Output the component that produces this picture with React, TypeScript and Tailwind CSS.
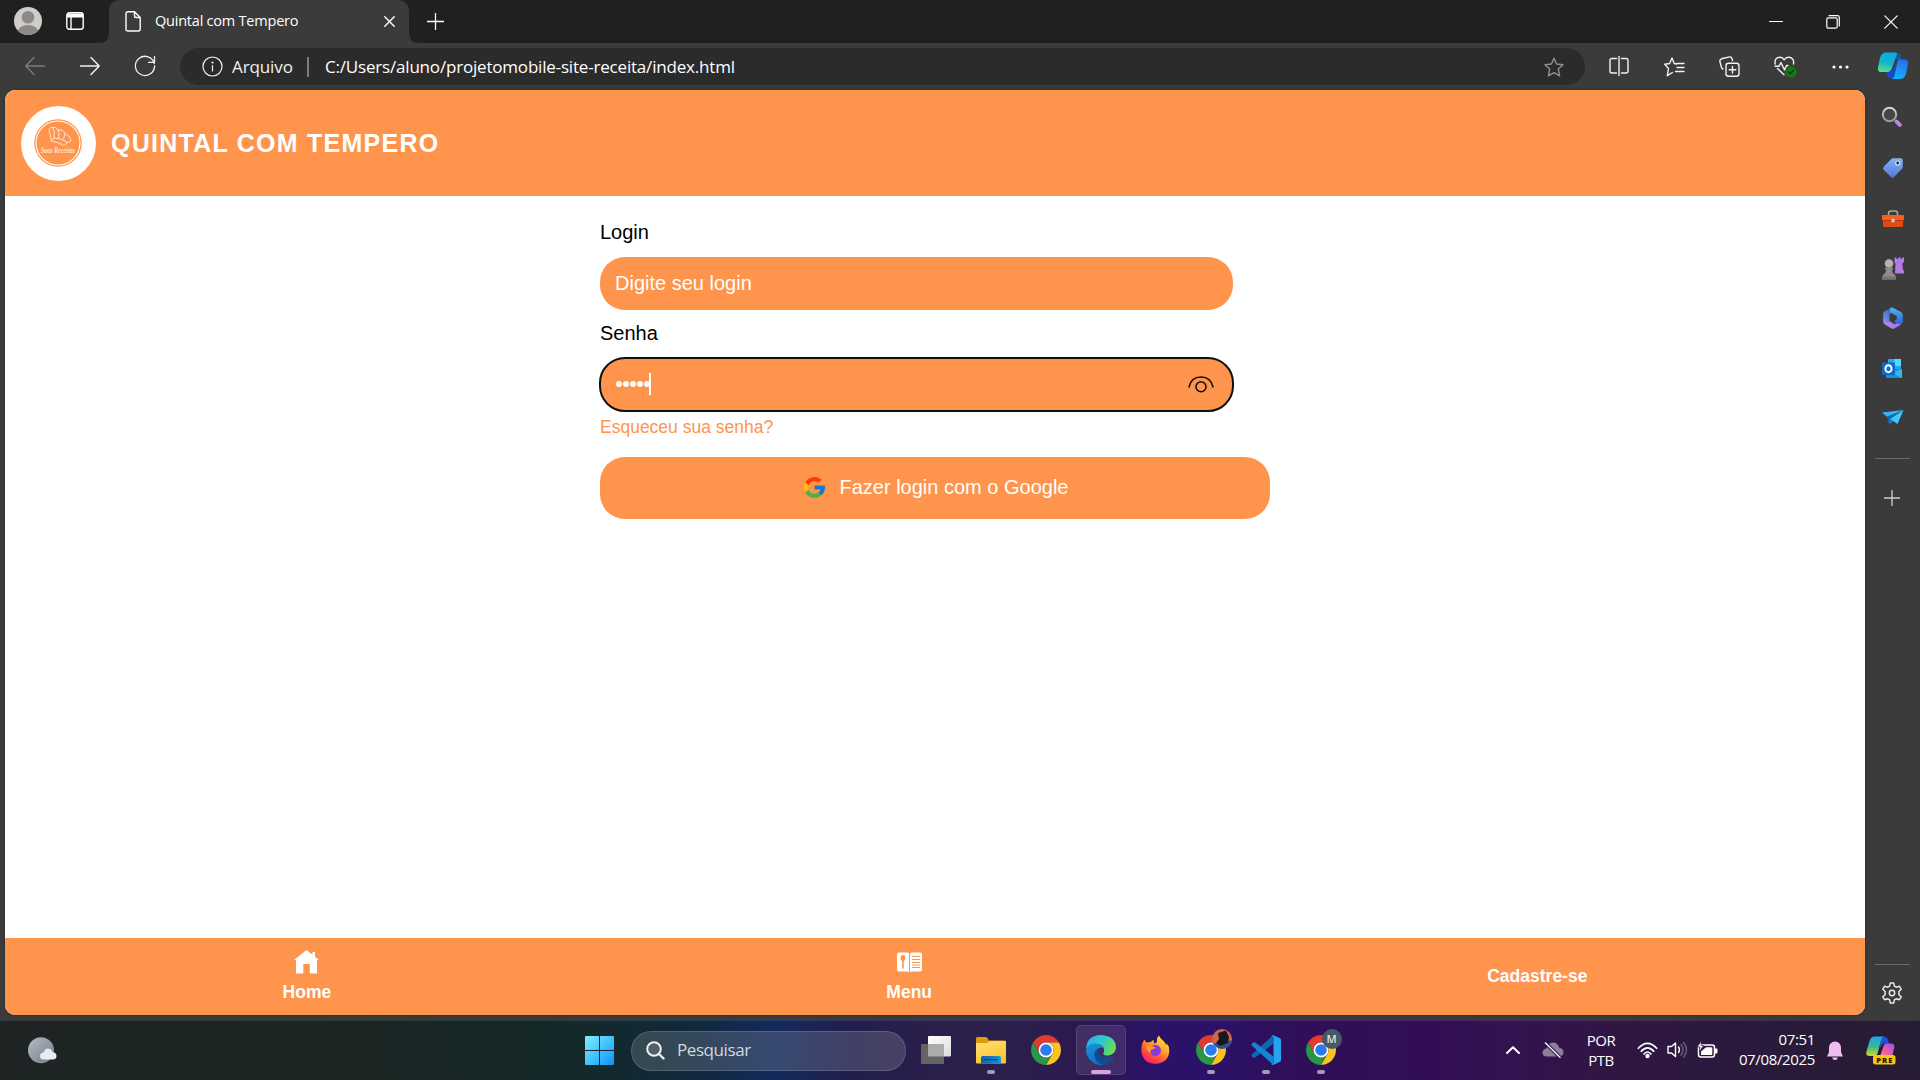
import React from "react";

type IconProps = { className?: string };

const ui = "font-['Open_Sans','Noto_Sans',sans-serif]";

/* ---------- Browser chrome icons ---------- */

const Line = ({ d, w = 20, h = 20, className = "", sw = 1.4, children }: { d?: string; w?: number; h?: number; className?: string; sw?: number; children?: React.ReactNode }) => (
  <svg width={w} height={h} viewBox={`0 0 ${w} ${h}`} fill="none" stroke="currentColor" strokeWidth={sw} strokeLinecap="round" strokeLinejoin="round" className={`block shrink-0 ${className}`}>
    {d && <path d={d} />}
    {children}
  </svg>
);

const Avatar = () => (
  <svg width="28" height="28" viewBox="0 0 28 28" className="block shrink-0">
    <defs><clipPath id="av"><circle cx="14" cy="14" r="14" /></clipPath></defs>
    <g clipPath="url(#av)">
      <rect width="28" height="28" fill="#cfcdca" />
      <circle cx="14" cy="10.2" r="6.3" fill="#8d8987" />
      <ellipse cx="14" cy="25.5" rx="10.5" ry="7.5" fill="#8d8987" />
    </g>
  </svg>
);

const starPath = "M10 1.2 L12.6 7 L19 7.7 L14.3 12 L15.6 18.8 L10 15.6 L4.4 18.8 L5.7 12 L1 7.7 L7.4 7 Z";

const Copilot = () => (
  <svg width="32" height="30" viewBox="0 0 32 30" className="block shrink-0">
    <defs>
      <linearGradient id="cp1" x1="0.4" y1="0" x2="0.2" y2="1"><stop offset="0" stopColor="#0fa8e8" /><stop offset=".5" stopColor="#12b5c8" /><stop offset="1" stopColor="#5fe08a" /></linearGradient>
      <linearGradient id="cp2" x1="0.6" y1="0" x2="0.3" y2="1"><stop offset="0" stopColor="#2a6fe8" /><stop offset="1" stopColor="#12b4fb" /></linearGradient>
    </defs>
    <path d="M17 1.5 h3 q3 0 4 4 l.8 3 h-6 l-6 5z" fill="#0b5f9c" />
    <path d="M8.5 20 h7 l4-10 -2 17.5 h-3 q-3 0-4-3.500z" fill="#1546d8" />
    <path d="M9 1.500 h9.500 q2 .3 1 3 l-4.500 12.500 q-1.500 4-4.500 4 H4 q-3.500 0-3-4.500 l2-9.500 Q4.500 1.500 9 1.500z" fill="url(#cp1)" />
    <path d="M22 8.500 h6 q3.500 0 3 4.500 l-2 9.500 q-1.500 5.500-6 5.500 h-8.500 q2.200-.7 3-3 l2.500-13 q.7-3.500 2-3.500z" fill="url(#cp2)" />
  </svg>
);

/* ---------- Sidebar icons ---------- */

const SideSearch = () => (
  <svg width="22" height="22" viewBox="0 0 22 22" className="block">
    <defs><linearGradient id="ring" x1="0" y1="0" x2="0" y2="1"><stop stopColor="#d8d6d4" /><stop offset="1" stopColor="#9a9896" /></linearGradient></defs>
    <circle cx="8.500" cy="8.500" r="6.700" fill="#454548" stroke="url(#ring)" strokeWidth="2" />
    <path d="M15.500 15.500 L18.800 18.800" stroke="#b884ee" strokeWidth="4" strokeLinecap="round" />
  </svg>
);
const SideTag = () => (
  <svg width="22" height="22" viewBox="0 0 22 22" className="block">
    <defs><linearGradient id="tg" x1="0" y1="0" x2="0" y2="1"><stop stopColor="#86b0f5" /><stop offset="1" stopColor="#4f7bd8" /></linearGradient></defs>
    <path d="M11 1.200 h7.500 q2.300 0 2.300 2.300 V10 q0 1-.8 1.800 L12 20 q-1.500 1.500-3 0 L1.700 12.800 q-1.400-1.500 0-3 L9.300 2 q.7-.8 1.700-.8z" fill="url(#tg)" />
    <circle cx="15.700" cy="6" r="2" fill="#222" stroke="#dfe6f2" strokeWidth="1.200" />
  </svg>
);
const SideToolbox = () => (
  <svg width="22" height="18" viewBox="0 0 22 18" className="block">
    <path d="M6.500 5 V3.500 Q6.500 1 9 1 h4 q2.500 0 2.500 2.500 V5" fill="none" stroke="#aaa9a8" strokeWidth="1.500" />
    <rect x="1" y="8" width="20" height="9" rx="1" fill="#e14c12" />
    <rect x="0" y="5" width="22" height="6" rx="1" fill="#f2611f" />
    <path d="M0 10.500h22" stroke="#b8350a" strokeWidth="1" />
    <circle cx="11" cy="10.500" r="2" fill="#c9c7c5" />
  </svg>
);
const SideChess = () => (
  <svg width="22" height="23" viewBox="0 0 22 23" className="block">
    <path d="M12.500 .5 h2 v1.500 h1.700 V.5 h2.600 v1.500 h1.200 V.5 h2 v4.500 l-1.700 1.500 .5 5.500 1.200 2.500 v2 H13 l.5-10-1-1z" fill="#b27be6" />
    <circle cx="7" cy="6.500" r="4.300" fill="#b5b3b1" />
    <path d="M3 10.500h8v2H9.800q.2 3.500 3.200 5.500 1 .8 1 4.500H0q0-3.700 1-4.500 3-2 3.200-5.500H3z" fill="#8f8d8b" />
    <path d="M0 19.500h14v3H0z" fill="#777573" />
  </svg>
);
const Side365 = () => (
  <svg width="22" height="22" viewBox="0 0 22 22" className="block">
    <defs>
      <linearGradient id="m1" x1="1" y1="0" x2="0" y2="1"><stop stopColor="#2451a8" /><stop offset="1" stopColor="#7f9ff5" /></linearGradient>
      <linearGradient id="m2" x1="0" y1="0" x2="1" y2="0"><stop stopColor="#b18af2" /><stop offset="1" stopColor="#a46fe0" /></linearGradient>
      <linearGradient id="m3" x1="0" y1="0" x2="0" y2="1"><stop stopColor="#4fb4f2" /><stop offset="1" stopColor="#2c62d8" /></linearGradient>
    </defs>
    <path d="M10 .5 L3 4 Q1.200 5 1.200 7 V14.500 q0 2 2 2.500 L7.500 14.500 V7.500 L13 3z" fill="url(#m1)" />
    <path d="M1.500 14.500 q3 2 6.500-.3 L12 17 l8-2 -1 2.500 -6 3.800 q-2 1-4 0 L3 17.500 Q1.500 16 1.500 14.500z" fill="url(#m2)" />
    <path d="M8 .7 q2-.7 3.500 .2 L19 5 Q20.800 6 20.800 8 V14 q0 2.500-2 3 -3 .5-7-2.700 l3-1.800 V9 L8 5.500z" fill="url(#m3)" />
  </svg>
);
const SideOutlook = () => (
  <svg width="22" height="20" viewBox="0 0 22 20" className="block">
    <rect x="6" y="0" width="13" height="12" rx="1" fill="#28a8ea" />
    <rect x="12.500" y="0" width="6.500" height="7" fill="#50d9ff" />
    <path d="M4 10 h16 v8 q0 1-1 1 H5 q-1 0-1-1z" fill="#1490df" />
    <path d="M20 10 v9 L10 14z" fill="#35b8f1" />
    <rect x="0" y="3.500" width="13" height="12.500" rx="1.200" fill="#0f6cc4" />
    <ellipse cx="6.500" cy="9.700" rx="3.100" ry="3.500" fill="none" stroke="#fff" strokeWidth="1.900" />
  </svg>
);
const SidePlane = () => (
  <svg width="22" height="16" viewBox="0 0 22 16" className="block">
    <path d="M0 2.500 L21.500 0 L7 8.500z" fill="#35b5f5" />
    <path d="M5 6.500 L21.500 0 L8 9 L7 14.500z" fill="#0f66b5" />
    <path d="M8 9 L21.500 0 L15.500 14 z" fill="#3fc6fb" />
    <path d="M7 14.500 L8 9 L11 11.500z" fill="#1586d8" />
  </svg>
);
const Gear = () => (
  <svg width="22" height="22" viewBox="0.500 0.500 23 23" fill="none" stroke="#ededed" strokeWidth="1.500" strokeLinejoin="round" className="block">
    <path d="M10.300 1.500h3.400l.8 3.400q1 .3 2 1.100l3.300-1 1.800 3-2.500 2.500q.3 1.500 0 3l2.500 2.500-1.800 3-3.300-1q-1 .8-2 1.100l-.8 3.400h-3.400l-.8-3.400q-1-.3-2-1.100l-3.300 1-1.800-3 2.500-2.500q-.3-1.500 0-3L2.400 8l1.800-3 3.300 1q1-.8 2-1.100z" />
    <circle cx="12" cy="12" r="2.800" />
  </svg>
);

/* ---------- Page icons ---------- */

const RecipeLogo = () => (
  <svg width="48" height="48" viewBox="0 0 48 48" className="block overflow-visible">
    <circle cx="24" cy="24" r="23.800" fill="#ff944d" />
    <circle cx="24" cy="24" r="22" fill="none" stroke="#fff" strokeWidth="1.100" />
    <g fill="none" stroke="#fff" strokeWidth=".9" strokeLinejoin="round" opacity=".85">
      <path d="M17.500 22 L15.500 13 Q14 9 18 8.500 Q22 7.500 24 11 Q29 10 31 14.500 Q36 17 37 21 Q36 24 33.500 23.500 L30 26.500 Q24 23 17.500 22z" />
      <path d="M19 9 Q21 12 20 19 M24 11 Q26 14 24.500 20 M31 14.500 Q31 18 28 21 M17.500 22 L20 19 Q27 19 33.500 23.500" />
    </g>
    <text x="24" y="33.500" textAnchor="middle" fontSize="8" fontStyle="italic" fill="#fff" fontFamily="Liberation Serif, serif" textLength="34" lengthAdjust="spacingAndGlyphs">Suas Receitas</text>
  </svg>
);

const GoogleG = () => (
  <svg width="21" height="21" viewBox="4 4 40 40" className="block shrink-0">
    <path fill="#FFC107" d="M43.600 20.100H42V20H24v8h11.300c-1.600 4.700-6.100 8-11.300 8-6.600 0-12-5.400-12-12s5.400-12 12-12c3.100 0 5.800 1.200 8 3l5.700-5.700C34 6.100 29.300 4 24 4 13 4 4 13 4 24s9 20 20 20 20-9 20-20c0-1.300-.1-2.600-.4-3.900z" />
    <path fill="#FF3D00" d="m6.300 14.700 6.600 4.800C14.700 15.100 19 12 24 12c3.100 0 5.800 1.200 8 3l5.700-5.700C34 6.100 29.300 4 24 4 16.300 4 9.700 8.300 6.300 14.700z" />
    <path fill="#4CAF50" d="M24 44c5.200 0 9.900-2 13.400-5.200l-6.200-5.200C29.200 35.100 26.700 36 24 36c-5.200 0-9.600-3.300-11.300-7.900l-6.500 5C9.500 39.600 16.200 44 24 44z" />
    <path fill="#1976D2" d="M43.600 20.100H42V20H24v8h11.300c-.8 2.200-2.200 4.200-4.100 5.600l6.200 5.200C37 39.200 44 34 44 24c0-1.300-.1-2.600-.4-3.900z" />
  </svg>
);

const HomeIcon = () => (
  <svg width="25" height="24" viewBox="0 0 25 24" className="block" fill="#fff">
    <path d="M12.500 0 L18.500 4.800 V2 h2.500 v4.800 L25 10 H23 V23.500 H15.800 V14 H9.300 V23.500 H2 V10 H0z" />
  </svg>
);
const MenuBook = () => (
  <svg width="25" height="21" viewBox="0 0 25 21" className="block">
    <path d="M2 0.500 h8 q1.500 0 2 1 V20.500 q-.5-1-2-1 H2 q-2 0-2-2 V2.500 q0-2 2-2z M15 .5 h8 q2 0 2 2 V17.500 q0 2-2 2 h-8 q-1.500 0-2 1 V1.500 q.5-1 2-1z" fill="#fff" />
    <ellipse cx="6" cy="6" rx="2.400" ry="3" fill="#ff944d" />
    <path d="M6 8v8.500" stroke="#ff944d" strokeWidth="1.600" />
    <path d="M15 4.500h8 M15 7.500h8 M15 10.500h8 M15 13h8 M15 15.500h8" stroke="#ff944d" strokeWidth="1" />
  </svg>
);

/* ---------- Taskbar icons ---------- */

const Weather = () => (
  <svg width="29" height="27" viewBox="0 0 29 27" className="block">
    <defs><linearGradient id="moon" x1="0" y1="0" x2="1" y2="1"><stop stopColor="#b4bcc6" /><stop offset="1" stopColor="#757c88" /></linearGradient></defs>
    <circle cx="13" cy="13.200" r="13" fill="url(#moon)" />
    <path d="M16 22.500 q-4 0-4-3.500 0-3 3.500-3.500 Q17 11.500 20 11.500 q3.500 0 4.500 3.500 4 .5 4 4 0 3.500-4 3.500z" fill="#e9edf2" />
  </svg>
);
const WindowsLogo = () => (
  <svg width="29" height="29" viewBox="0 0 29 29" className="block shrink-0">
    <defs><linearGradient id="wl" gradientUnits="userSpaceOnUse" x1="0" y1="0" x2="29" y2="29"><stop stopColor="#7ff0ff" /><stop offset="1" stopColor="#0a94fb" /></linearGradient></defs>
    <path fill="url(#wl)" d="M1 0h13v14H0V1q0-1 1-1z M15 0h13q1 0 1 1v13H15z M0 15h14v14H1q-1 0-1-1z M15 15h14v13q0 1-1 1H15z" />
  </svg>
);
const TaskView = () => (
  <svg width="30" height="28" viewBox="0 0 30 28" className="block">
    <defs><linearGradient id="tv" x1="0" y1="0" x2="1" y2="1"><stop stopColor="#fff" /><stop offset="1" stopColor="#dcdcdc" /></linearGradient></defs>
    <rect x="7" y="0" width="23" height="20.500" rx="1" fill="url(#tv)" />
    <rect x="0" y="8" width="23" height="20" rx="1" fill="#636363" />
    <rect x="7" y="8" width="16" height="12.500" fill="#ababab" />
  </svg>
);
const Explorer = () => (
  <svg width="30" height="27" viewBox="0 0 30 27" className="block">
    <defs>
      <linearGradient id="fo" x1="0" y1="0" x2="0.500" y2="1"><stop stopColor="#ffe07a" /><stop offset="1" stopColor="#fcc42c" /></linearGradient>
      <linearGradient id="fb" x1="0" y1="0" x2="1" y2="0"><stop stopColor="#0f63ad" /><stop offset="1" stopColor="#1a93dd" /></linearGradient>
    </defs>
    <path d="M0 1.500 Q0 0 1.500 0 H9.500 q1 0 1.700 .8 L13 3.500 H28.500 Q30 3.500 30 5 V12 H0z" fill="#dd9c0a" />
    <path d="M0 6 H11 L14 4 H30 V25.500 q0 1-1 1 H1 q-1 0-1-1z" fill="url(#fo)" />
    <path d="M5 26.500 V21 q0-2 2-2 H23 q2 0 2 2 V26.500z" fill="url(#fb)" />
    <rect x="8" y="22" width="14" height="1.300" rx=".6" fill="#0b4679" />
  </svg>
);
const Chrome = () => (
  <svg width="30" height="30" viewBox="2 2 44 44" className="block">
    <path d="M4.950 13 A22 22 0 0 1 43.050 13 H24 A11 11 0 0 0 14.470 29.500z" fill="#e23b2e" />
    <path d="M43.050 13 A22 22 0 0 1 24 46 L33.530 29.500 A11 11 0 0 0 24 13z" fill="#fcc31e" />
    <path d="M24 46 A22 22 0 0 1 4.950 13 L14.470 29.500 A11 11 0 0 0 33.530 29.500z" fill="#279847" />
    <circle cx="24" cy="24" r="11" fill="#fff" />
    <circle cx="24" cy="24" r="8.500" fill="#2b7bf0" />
  </svg>
);
const EdgeIcon = () => (
  <svg width="30" height="30" viewBox="0 0 30 30" className="block">
    <defs>
      <linearGradient id="e1" x1="0" y1=".2" x2="1" y2=".6"><stop stopColor="#2fa9ee" /><stop offset=".5" stopColor="#2fc7cf" /><stop offset="1" stopColor="#6be047" /></linearGradient>
      <linearGradient id="e2" x1="0" y1="0" x2=".4" y2="1"><stop stopColor="#1a94dd" /><stop offset="1" stopColor="#0d6fc4" /></linearGradient>
    </defs>
    <path d="M0 14 Q1 0 15 0 Q30 1 30 13 Q29 20 22 20.500 Q17.500 20.500 17.300 18.500 Q17.300 17.700 18 17 Q19 14 17 12 Q13 8 6 9.500 Q1.500 11 0 14z" fill="url(#e1)" />
    <path d="M0 15 Q1 8.500 9 8.500 Q16 8.500 18.200 13 Q13 11.500 10.500 15.500 Q8 21 12.500 26 Q15 29 18 29.500 Q10 31.500 4 25 Q0 20.500 0 15z" fill="url(#e2)" />
    <path d="M12 13.500 Q7.500 16.500 8.500 21 Q10.500 28.500 17 29.700 Q24 29 28 22.500 Q28 21 26.500 21.700 Q19 24.500 14.500 20.500 Q11 17.500 12 13.500z" fill="#114c93" />
  </svg>
);
const Firefox = () => (
  <svg width="29" height="30" viewBox="0 0 29 30" className="block">
    <defs>
      <linearGradient id="f1" x1=".85" y1="0" x2=".2" y2="1"><stop stopColor="#fff04a" /><stop offset=".35" stopColor="#ffb02a" /><stop offset=".65" stopColor="#ff5a35" /><stop offset="1" stopColor="#f0147c" /></linearGradient>
      <radialGradient id="f2"><stop stopColor="#6a49d8" /><stop offset="1" stopColor="#9a35d0" /></radialGradient>
    </defs>
    <path d="M3.500 4.500 Q4.300 7 6 7.500 Q8 6.800 10 7 Q11 5.300 13 5 Q12.500 8 13.500 8.500 L16 7 Q15.500 2.500 18 .5 Q19 3.500 22 5.500 Q24.500 7.500 25 10.500 Q25.700 9.500 25.500 8 Q28.500 11.500 28.300 16 Q27.500 28 14.500 28.800 Q2 28.500 .5 17 Q-.2 9.500 3.500 4.500z" fill="url(#f1)" />
    <circle cx="14.300" cy="15.500" r="5.700" fill="url(#f2)" />
    <path d="M5 11 Q9 9.500 14.500 12.500 Q13 14.500 10.500 14.500 Q8.500 16 10 18.500 Q6 17 5 11z" fill="#ff9a24" />
  </svg>
);
const VsCode = () => (
  <svg width="30" height="30" viewBox="0 0 30 30" className="block">
    <path d="M22 .3 L0.800 19.500 q-.8 .8 0 1.700 l1.600 1.400 q.8 .6 1.700 0 L22.500 8.500z" fill="#0a6ab8" />
    <path d="M22 29.700 L.8 10.500 q-.8-.8 0-1.700 l1.600-1.400 q.8-.6 1.700 0 L22.500 21.500z" fill="#1485d2" />
    <path d="M22.500 .2 L29 3.300 q1 .5 1 1.500 V25.200 q0 1-1 1.500 L22.500 29.800 q-1.500 .3-2.800-.8 2.800 .8 2.800-2 V3 q0-2.800-2.800-2 1.300-1.100 2.800-.8z" fill="#25a4f2" />
  </svg>
);
const CopilotPre = () => (
  <svg width="30" height="29" viewBox="0 0 30 29" className="block">
    <defs>
      <linearGradient id="k1" x1="0" y1="0" x2="0" y2="1"><stop stopColor="#22a3f2" /><stop offset=".5" stopColor="#35b590" /><stop offset="1" stopColor="#d5d92c" /></linearGradient>
      <linearGradient id="k2" x1="1" y1="0" x2="0" y2="1"><stop stopColor="#9a4ef2" /><stop offset=".6" stopColor="#f0619c" /><stop offset="1" stopColor="#ff9d60" /></linearGradient>
    </defs>
    <path d="M15 .5 h3 q3 0 4 3.500 l1 3.500 h-6 l-3 5z" fill="#1b53d5" />
    <path d="M8.500 .5 h9 q-1.500 .7-2.200 3 L12 16 q-1 4-4 4 H3.500 Q-.5 20 .3 16 L3.500 5 Q5 .5 8.500 .5z" fill="url(#k1)" />
    <path d="M20 7.500 h5 q4 0 3.300 4 l-2 8 q-.5 2-3 2 H12 q2-.5 2.700-3 L17.500 10 q.7-2.500 2.500-2.500z" fill="url(#k2)" />
    <rect x="7" y="19" width="22.500" height="9.500" rx="2.500" fill="#fcc40f" />
    <text x="18.300" y="26.500" textAnchor="middle" fontSize="7.600" fontWeight="800" fill="#201a00" fontFamily="Open Sans, sans-serif" textLength="16">PRE</text>
  </svg>
);

function TaskItem({ children, active = false, open = false }: { children: React.ReactNode; active?: boolean; open?: boolean }) {
  return (
    <div className="flex h-full w-[55px] items-start justify-center pt-[4px]">
      <div className={`relative flex h-[50px] w-[50px] items-center justify-center rounded-[5px] ${active ? "bg-white/10 ring-1 ring-white/10 ring-inset" : ""}`}>
        {children}
        {(active || open) && (
          <span className={`absolute bottom-[1px] left-1/2 h-[4px] -translate-x-1/2 rounded-full ${active ? "w-[20px] bg-[#dda0e2]" : "w-[8px] bg-[#a39bb5]"}`} />
        )}
      </div>
    </div>
  );
}

function Cell({ children, className = "" }: { children: React.ReactNode } & IconProps) {
  return <div className={`flex shrink-0 items-center justify-center ${className}`}>{children}</div>;
}

function TitleBar() {
  return (
    <div className="flex h-[43px] shrink-0 bg-[#202020] text-white">
      <div className="flex w-[99px] shrink-0 items-center pb-px pl-[14px]">
        <Avatar />
        <Line w={18} h={18} className="ml-[24px]" sw={1.400}>
          <rect x=".8" y=".8" width="16.400" height="16.400" rx="2.500" />
          <path d="M1 3.500h16" strokeWidth="4" strokeLinecap="butt" />
          <path d="M5 5v12" />
        </Line>
      </div>
      <svg width="10" height="43" viewBox="0 0 10 43" className="block shrink-0"><path d="M10 33 Q10 43 0 43 H10z" fill="#3b3b3b" /></svg>
      <div className="flex w-[300px] shrink-0 items-center rounded-t-[10px] bg-[#3b3b3b] pl-[16px]">
        <Line w={16} h={21} sw={1.400} d="M3 .8 H9.500 L15.200 6.500 V18 q0 2-2 2 H3 q-2 0-2-2 V2.800 q0-2 2-2z M9.500 .8 V5 q0 1.500 1.500 1.500 h4.200" />
        <span className={`${ui} ml-[14px] -mt-px w-[229px] text-[14.500px] leading-[20px] tracking-[-0.22px] whitespace-nowrap`}>Quintal com Tempero</span>
        <Line w={11} h={11} d="M.8 .8 L10.200 10.200 M10.200 .8 L.8 10.200" />
      </div>
      <svg width="10" height="43" viewBox="0 0 10 43" className="block shrink-0"><path d="M0 33 Q0 43 10 43 H0z" fill="#3b3b3b" /></svg>
      <div className="flex flex-1 items-center pb-px pl-[8px]">
        <Line w={17} h={17} d="M8.500 .5 V16.500 M.5 8.500 H16.500" sw={1.300} />
      </div>
      <div className="flex items-center">
        <Cell className="w-[57px]"><Line w={14} h={14} className="-ml-px" d="M.5 6.500H13.500" sw={1} /></Cell>
        <Cell className="w-[57px]"><Line w={14} h={14} className="-ml-px" sw={1.200}><rect x=".8" y="2.800" width="10.400" height="10.400" rx="1.500" /><path d="M3 .7 H11.500 Q13.300 .7 13.300 2.500 V11" /></Line></Cell>
        <Cell className="w-[58px]"><Line w={14} h={14} sw={1.200} d="M.8 .8 L13.200 13.200 M13.200 .8 L.8 13.200" /></Cell>
      </div>
    </div>
  );
}

function Toolbar() {
  return (
    <div className="flex h-[47px] shrink-0 items-center bg-[#3b3b3b] pl-[7px] text-[#f2f2f2]">
      <Cell className="w-[55px] pb-px text-[#7c7c7c]"><Line d="M19.500 10H.8 M9 1.500 L.8 10 L9 18.500" sw={1.300} /></Cell>
      <Cell className="w-[55px] pb-px"><Line d="M.5 10H19.200 M11 1.500 L19.200 10 L11 18.500" /></Cell>
      <Cell className="w-[55px] pb-px"><Line w={22} h={22} d="M20.300 8.500 A9.600 9.600 0 1 0 20.600 11 M20.500 1.500 V7.300 H14.500" sw={1.300} /></Cell>
      <div className="ml-[8px] flex h-[37px] w-[1405px] items-center rounded-full bg-[#2b2b2b] pl-[22px]">
        <Line w={21} h={21} sw={1.200}><circle cx="10.500" cy="10.500" r="9.500" /><path d="M10.500 9.500 V15" /><circle cx="10.500" cy="6.500" r=".5" fill="currentColor" /></Line>
        <span className={`${ui} ml-[9px] w-[75px] text-[17px] leading-[24px] tracking-[-0.1px] whitespace-nowrap`}>Arquivo</span>
        <span className="h-[20px] w-[2px] bg-[#7d7d7d]" />
        <span className={`${ui} ml-[16px] flex-1 text-[17px] leading-[24px] tracking-[-0.19px] whitespace-nowrap text-white`}>C:/Users/aluno/projetomobile-site-receita/index.html</span>
        <Line className="mr-[21px] text-[#8f8f8f]" d={starPath} />
      </div>
      <Cell className="ml-[6px] w-[55px] pb-px"><Line w={20} h={20} d="M7.500 2.500 H3 Q1 2.500 1 4.500 V15 q0 2 2 2 H7.500 M10 .5 V19.500 M12.500 2.500 H17 q2 0 2 2 V15 q0 2-2 2 H12.500" /></Cell>
      <Cell className="ml-px w-[55px]"><Line w={21} h={20} d="M12.500 7 L10.200 6.500 L8 1 L5.600 6.500 L.7 7.300 L4.500 11.500 L3.300 18.700 L8.300 15.500 M12.800 6.500 H20 M13 10.500 H20 M11.500 14.500 H20" /></Cell>
      <Cell className="w-[55px]"><Line w={21} h={21}><rect x="7" y="7.200" width="13" height="13" rx="2.500" /><path d="M13.500 10.500 V17 M10.200 13.700 H16.800 M4 13 Q2.800 12.500 2.500 11.500 L.9 5.500 Q.6 3.500 2.500 2.800 L10.500 .9 Q12.500 .6 13 2.500 L13.500 4.500" /></Line></Cell>
      <Cell className="w-[55px] pl-[2px]">
        <svg width="23" height="22" viewBox="0 0 23 22" fill="none" className="block" stroke="#f2f2f2" strokeWidth="1.400" strokeLinejoin="round" strokeLinecap="round">
          <path d="M1.200 8 Q0 2 5.500 1.300 Q8.500 1 10.200 3.800 Q12 1 15 1.300 Q20.500 2 19.500 8 M3.500 12.500 L10 18.800 M1 10.300 H5 L7 6.500 L10.500 14 L12.500 9.500 H14" />
          <circle cx="17" cy="16" r="5.700" fill="#107c10" stroke="none" />
          <path d="M14.500 16 L16.300 17.700 L19.500 14.300" stroke="#262626" strokeWidth="1.300" />
        </svg>
      </Cell>
      <Cell className="w-[55px] pl-px"><svg width="17" height="4" viewBox="0 0 17 4" fill="#fff" className="block"><circle cx="2" cy="2" r="1.600" /><circle cx="8.500" cy="2" r="1.600" /><circle cx="15" cy="2" r="1.600" /></svg></Cell>
      <Cell className="w-[51px] pb-px"><Copilot /></Cell>
    </div>
  );
}

function Sidebar() {
  return (
    <div className="flex w-[55px] shrink-0 flex-col items-center">
      <div className="flex flex-col items-center pt-[2px]">
        <Cell className="h-[50px] pr-px"><SideSearch /></Cell>
        <Cell className="h-[51px]"><SideTag /></Cell>
        <Cell className="h-[50px] pt-px"><SideToolbox /></Cell>
        <Cell className="h-[50px]"><SideChess /></Cell>
        <Cell className="h-[50px]"><Side365 /></Cell>
        <Cell className="h-[50px] pt-px"><SideOutlook /></Cell>
        <Cell className="h-[50px]"><SidePlane /></Cell>
      </div>
      <div className="mt-[15px] h-px w-[35px] bg-[#6a6a6a]" />
      <Line w={16} h={16} className="mt-[31px] mr-px text-[#d0d0d0]" d="M8 .5 V15.500 M.5 8 H15.500" sw={1.300} />
      <div className="flex-1" />
      <div className="h-px w-[35px] bg-[#6a6a6a]" />
      <div className="mt-[17px] mr-px mb-[16px]"><Gear /></div>
    </div>
  );
}

function LoginPage() {
  return (
    <div className="flex h-[925px] w-[1860px] shrink-0 flex-col overflow-hidden rounded-[10px] bg-white font-['Liberation_Sans',Arial,sans-serif] shadow-[0_0_3px_rgba(0,0,0,0.35)]">
      <header className="flex h-[106px] shrink-0 items-center bg-[#ff944d] pl-[16px]">
        <div className="flex h-[75px] w-[75px] items-center justify-center rounded-full bg-white pr-px"><RecipeLogo /></div>
        <h1 className="ml-[15px] text-[25px] leading-[30px] font-bold tracking-[1.25px] text-white">QUINTAL COM TEMPERO</h1>
      </header>
      <main className="flex-1">
        <div className="ml-[595px] flex w-[670px] flex-col items-start pt-[24px] text-[20px] leading-[24px] text-black">
          <label>Login</label>
          <div className="mt-[13px] flex h-[53px] w-[633px] items-center rounded-[25px] bg-[#ff944d] pb-[2px] pl-[15px] text-white">Digite seu login</div>
          <label className="mt-[11px]">Senha</label>
          <div className="mt-[12px] -ml-px flex h-[55px] w-[635px] items-center rounded-[26px] border-2 border-[#101010] bg-[#ff944d] pr-[18px] pb-px pl-[15px]">
            <div className="flex items-center gap-[1px]">
              {[0, 1, 2, 3, 4].map((i) => <span key={i} className="h-[6px] w-[6px] rounded-full bg-white" />)}
            </div>
            <span className="-ml-px h-[22px] w-[2px] bg-white" />
            <svg width="26" height="17" viewBox="0 0 26 17" fill="none" stroke="#0c0c0c" strokeWidth="1.500" className="ml-auto block">
              <path d="M.8 11.500 Q3 1 13 1 Q23 1 25.200 11.500" />
              <circle cx="13" cy="10.700" r="5" />
            </svg>
          </div>
          <a className="mt-[4px] text-[17.500px] leading-[22px] text-[#ff944d]">Esqueceu sua senha?</a>
          <button className="mt-[19px] flex h-[62px] w-[670px] items-center justify-center gap-[14px] rounded-[25px] bg-[#ff944d] pb-px pl-[3px] text-[20px] text-white"><GoogleG /><span className="-mt-px">Fazer login com o Google</span></button>
        </div>
      </main>
      <footer className="flex h-[77px] shrink-0 items-center justify-around bg-[#ff944d] text-[17.500px] leading-[20px] font-bold text-white">
        <div className="flex flex-col items-center gap-[8px] pb-px"><HomeIcon /><span>Home</span></div>
        <div className="flex flex-col items-center gap-[9px]"><MenuBook /><span>Menu</span></div>
        <div className="pb-[2px]">Cadastre-se</div>
      </footer>
    </div>
  );
}

function Taskbar() {
  return (
    <div className={`${ui} flex h-[60px] shrink-0 items-center border-t border-white/10 bg-[linear-gradient(90deg,#1d2423_0px,#1b2624_380px,#152726_500px,#13292b_590px,#11283c_690px,#142a5a_775px,#211f4c_850px,#2a1f4a_930px,#2b204c_1010px,#2c1850_1080px,#2b1268_1160px,#2b1168_1220px,#300f58_1300px,#320f54_1440px,#321350_1500px,#301642_1620px,#291a3a_1780px,#261c32_1920px)]`}>
      <div className="w-[585px] shrink-0 pb-px pl-[28px]"><Weather /></div>
      <WindowsLogo />
      <div className="ml-[17px] flex h-[40px] w-[275px] shrink-0 items-center rounded-full border border-white/15 bg-white/15 pb-px pl-[14px]">
        <svg width="19" height="19" viewBox="0 0 19 19" fill="none" stroke="#f0f0f0" strokeWidth="2" strokeLinecap="round" className="block"><circle cx="8" cy="8" r="6.800" fill="#ffffff22" /><path d="M13 13 L17.500 17.500" strokeWidth="2.400" /></svg>
        <span className="ml-[12px] text-[17px] leading-[22px] tracking-[-0.42px] text-[#d3d6dd]">Pesquisar</span>
      </div>
      <div className="ml-[2px] flex h-full items-center">
        <TaskItem><TaskView /></TaskItem>
        <TaskItem open><Explorer /></TaskItem>
        <TaskItem><Chrome /></TaskItem>
        <TaskItem active><EdgeIcon /></TaskItem>
        <TaskItem><Firefox /></TaskItem>
        <TaskItem open>
          <Chrome />
          <svg width="20" height="20" viewBox="0 0 20 20" className="absolute top-[4px] right-[4px] block">
            <defs><clipPath id="pf"><circle cx="10" cy="10" r="10" /></clipPath></defs>
            <g clipPath="url(#pf)"><rect width="20" height="20" fill="#cf654c" /><path d="M0 14 L8 15 L20 11 V20 H0z" fill="#2b528c" /><path d="M6 4 L14 1.500 L17 8 L16 14 L8 17 L4 14 L7 10z" fill="#17181d" /></g>
          </svg>
        </TaskItem>
        <TaskItem open><VsCode /></TaskItem>
        <TaskItem open>
          <Chrome />
          <span className="absolute top-[4px] right-[4px] flex h-[20px] w-[20px] items-center justify-center rounded-full bg-[#455a64] text-[11px] font-semibold text-[#dfe3e5]">M</span>
        </TaskItem>
      </div>
      <div className="ml-auto flex h-full items-center pb-px text-[15px] leading-[20px] text-white">
        <Line w={14} h={8} sw={2} d="M1 7 L7 1.200 L13 7" />
        <svg width="22" height="18" viewBox="0 0 22 18" className="ml-[22px] block">
          <path d="M5 15.500 Q.5 15.500 .5 11.500 Q.8 8 4.500 7.500 Q6 1.500 11 1.500 Q15.500 1.500 17 6.500 Q21.500 7.500 21.500 11.500 Q21 15.500 17 15.500z" fill="#8d7f9a" />
          <path d="M3 1.500 L18.500 16.800" stroke="#2f1648" strokeWidth="3.500" />
          <path d="M3 1.500 L18.500 16.800" stroke="#fff" strokeWidth="1.300" />
        </svg>
        <div className="-mt-px ml-[19px] w-[36px] text-center tracking-[-0.5px]">POR<br />PTB</div>
        <svg width="21" height="17" viewBox="0 0 21 17" fill="none" stroke="#fff" strokeWidth="1.600" className="ml-[18px] block">
          <path d="M.8 6.800 Q10.500 -4 20.200 6.800 M3.800 9.800 Q10.500 2 17.200 9.800 M6.500 12.500 Q10.500 7.500 14.500 12.500" /><circle cx="10.500" cy="14" r="2.200" fill="#fff" stroke="none" />
        </svg>
        <svg width="21" height="18" viewBox="0 0 21 18" fill="none" stroke="#fff" strokeWidth="1.400" strokeLinejoin="round" strokeLinecap="round" className="ml-[9px] block">
          <path d="M8.500 2 L4.500 5.500 H1 V12 H4.500 L8.500 15.500z M11.500 6 Q13.500 8.700 11.500 11.500" /><path d="M14 3.500 Q18 8.700 14 14 M16.500 1.500 Q22.500 8.700 16.500 16" stroke="#6d5a7c" />
        </svg>
        <svg width="21" height="18" viewBox="0 0 21 18" className="ml-[9px] block">
          <rect x="1.500" y="4" width="16" height="12" rx="2.500" fill="none" stroke="#fff" strokeWidth="1.500" />
          <path d="M18 7.500 h1.500 q1 0 1 1 v3 q0 1-1 1 H18z M4 14 V10.500 L9 6.300 H14.500 q.8 0 .8 .8 V13 q0 1-.8 1z" fill="#fff" />
          <path d="M4 0 L.5 6 H3 L2.500 10.500 L6.500 4.500 H4z" fill="#fff" stroke="#2c1840" strokeWidth=".6" />
        </svg>
        <div className="-mt-[3px] ml-[17px] w-[80px] text-right tracking-[-0.35px] whitespace-nowrap">07:51<br />07/08/2025</div>
        <svg width="16" height="19" viewBox="0 0 16 19" className="ml-[12px] block" fill="#f0bdf2"><path d="M8 .5 Q14 1 14 7 V11 L16 15.500 H0 L2 11 V7 Q2 1 8 .5z M5.200 16.500 H10.800 Q10.500 19 8 19 Q5.500 19 5.200 16.500z" /></svg>
        <div className="mr-[24px] ml-[23px]"><CopilotPre /></div>
      </div>
    </div>
  );
}

export default function App() {
  return (
    <div className="flex h-[1080px] w-[1920px] flex-col overflow-hidden bg-[#3b3b3b]">
      <TitleBar />
      <Toolbar />
      <div className="flex h-[930px] shrink-0 pl-[5px]">
        <LoginPage />
        <Sidebar />
      </div>
      <Taskbar />
    </div>
  );
}
